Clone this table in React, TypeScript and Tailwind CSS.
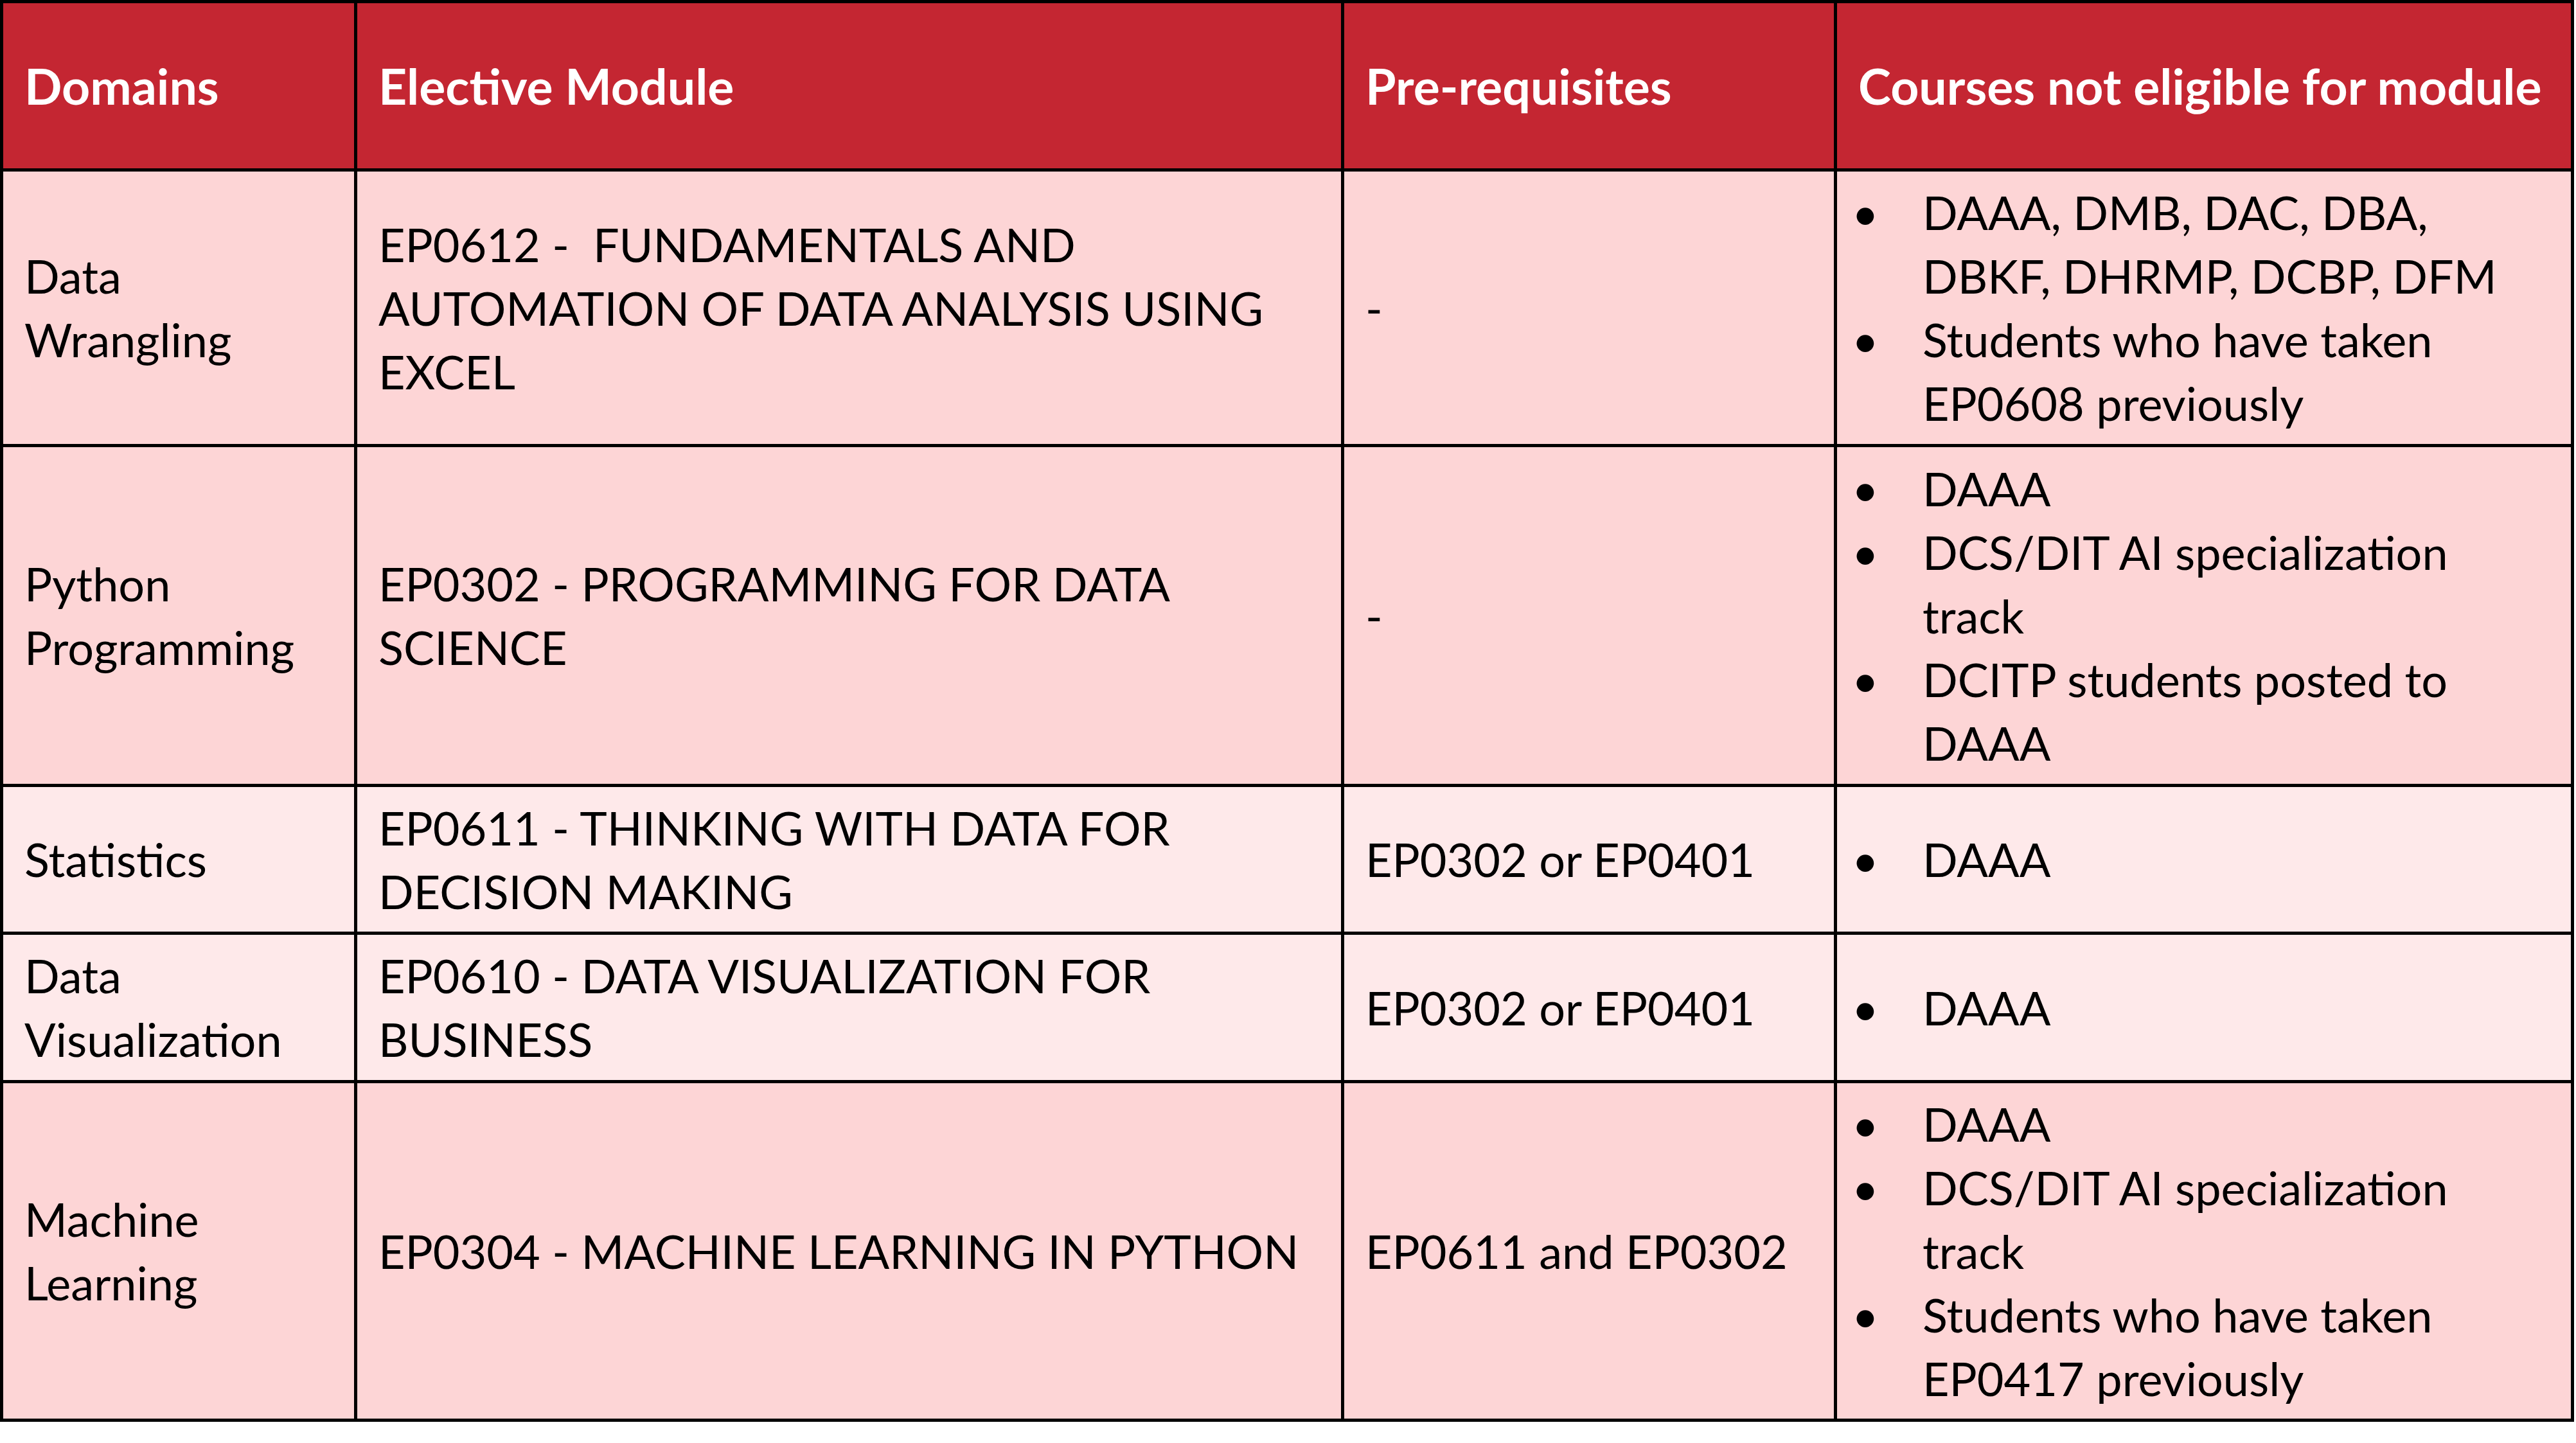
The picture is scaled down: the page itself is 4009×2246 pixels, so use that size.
type Row = {
  domain: string[];
  module: string[];
  prereq: string[];
  notEligible: string[][];
  tone: "dark" | "light";
  height: string;
};

const rows: Row[] = [
  {
    domain: ["Data", "Wrangling"],
    module: ["EP0612 -\u00a0 FUNDAMENTALS AND", "AUTOMATION OF DATA ANALYSIS USING", "EXCEL"],
    prereq: ["-"],
    notEligible: [
      ["DAAA, DMB, DAC, DBA,", "DBKF, DHRMP, DCBP, DFM"],
      ["Students who have taken", "EP0608 previously"],
    ],
    tone: "dark",
    height: "h-[424px]",
  },
  {
    domain: ["Python", "Programming"],
    module: ["EP0302 - PROGRAMMING FOR DATA", "SCIENCE"],
    prereq: ["-"],
    notEligible: [["DAAA"], ["DCS/DIT AI specialization", "track"], ["DCITP students posted to", "DAAA"]],
    tone: "dark",
    height: "h-[524px]",
  },
  {
    domain: ["Statistics"],
    module: ["EP0611 - THINKING WITH DATA FOR", "DECISION MAKING"],
    prereq: ["EP0302 or EP0401"],
    notEligible: [["DAAA"]],
    tone: "light",
    height: "h-[225px]",
  },
  {
    domain: ["Data", "Visualization"],
    module: ["EP0610 - DATA VISUALIZATION FOR", "BUSINESS"],
    prereq: ["EP0302 or EP0401"],
    notEligible: [["DAAA"]],
    tone: "light",
    height: "h-[226px]",
  },
  {
    domain: ["Machine", "Learning"],
    module: ["EP0304 - MACHINE LEARNING IN PYTHON"],
    prereq: ["EP0611 and EP0302"],
    notEligible: [["DAAA"], ["DCS/DIT AI specialization", "track"], ["Students who have taken", "EP0417 previously"]],
    tone: "dark",
    height: "h-[522px]",
  },
];

const headers = ["Domains", "Elective Module", "Pre-requisites", "Courses not eligible for module"];

function Lines({ lines }: { lines: string[] }) {
  return (
    <div className="whitespace-nowrap">
      {lines.map((l, i) => (
        <div key={i}>{l}</div>
      ))}
    </div>
  );
}

function Cell({ tone, height, children }: { tone: string; height: string; children: React.ReactNode }) {
  return (
    <div
      className={`${height} flex items-center pl-[33px] pr-4 text-black ${
        tone === "dark" ? "bg-[#fdd5d6]" : "bg-[#fee9ea]"
      }`}
    >
      {children}
    </div>
  );
}

export default function App() {
  return (
    <div className="w-[4009px] h-[2246px] bg-white font-['Lato',sans-serif] text-[72px] leading-[99px]">
      <div className="w-[4006px] grid grid-cols-[546px_1531px_762px_1142px] gap-[5px] p-[5px] bg-black">
        {/* header */}
        {headers.map((h) => (
          <div
            key={h}
            className="h-[257px] flex items-center pl-[33px] bg-[#c42632] text-white font-bold text-[77px] whitespace-nowrap"
          >
            {h}
          </div>
        ))}

        {rows.map((r, idx) => (
          <div key={idx} className="contents">
            <Cell tone={r.tone} height={r.height}>
              <Lines lines={r.domain} />
            </Cell>
            <Cell tone={r.tone} height={r.height}>
              <Lines lines={r.module} />
            </Cell>
            <Cell tone={r.tone} height={r.height}>
              <Lines lines={r.prereq} />
            </Cell>
            <Cell tone={r.tone} height={r.height}>
              <ul className="flex flex-col">
                {r.notEligible.map((item, i) => (
                  <li key={i} className="flex">
                    <span className="w-[110px] -ml-[10px] shrink-0">•</span>
                    <Lines lines={item} />
                  </li>
                ))}
              </ul>
            </Cell>
          </div>
        ))}
      </div>
    </div>
  );
}
